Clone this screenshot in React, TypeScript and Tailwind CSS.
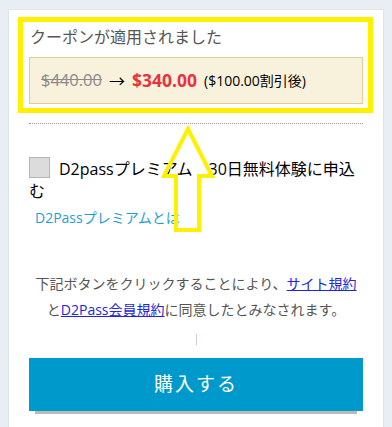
import React from 'react';

const font = { fontFamily: '"Open Sans", "Noto Sans CJK JP", sans-serif' };

const App: React.FC = () => {
    return (
        <div className="relative min-h-[427px] bg-[#e9edf4] pt-[9px] px-[8px] overflow-hidden" style={font}>
            <div className="bg-white border border-[#dfe3ea] border-b-0 min-h-[418px] px-[20px] pt-[15px]">
                <h3 className="text-[16px] leading-[24px] text-[#555] ml-[1px]">クーポンが適用されました</h3>

                <div className="mt-[8px] h-[47px] border border-[#e2cf8c] bg-[#f8f1dc] flex items-center px-[11px] gap-[7px] whitespace-nowrap">
                    <span className="text-[16.5px] text-[#8a8a8a] line-through">$440.00</span>
                    <span className="text-[16px] text-black">→</span>
                    <span className="text-[17.5px] font-bold text-[#e8323c]">$340.00</span>
                    <span className="text-[14px] text-black">($100.00割引後)</span>
                </div>

                <div className="mt-[19px] border-t border-dotted border-[#999]" />

                <div className="mt-[33px] text-[16px] leading-[22px] text-black">
                    <span className="inline-block align-[-3px] w-[21px] h-[21px] bg-[#dcdcdc] border border-[#b5b5b5] mr-[9px]" />
                    D2passプレミアム　30日無料体験に申込む
                </div>
                <div className="mt-[6px] pl-[6px] text-[14px] leading-[20px] text-[#1e9fd4]">D2Passプレミアムとは</div>

                <p className="mt-[43px] text-center text-[14px] leading-[26px] text-[#555]">
                    下記ボタンをクリックすることにより、<a className="text-[#2424dd] underline">サイト規約</a>
                    <br />
                    と<a className="text-[#2424dd] underline">D2Pass会員規約</a>に同意したとみなされます。
                </p>

                <div className="flex justify-center mt-[11px]">
                    <div className="w-px h-[11px] bg-[#dccaca]" />
                </div>

                <button className="mt-[13px] w-full h-[53px] bg-[#0099cc] text-white text-[19px] tracking-[2px] shadow-[0_9px_0_-6px_#bbbbbb]">
                    購入する
                </button>
            </div>

            {/* annotation overlay */}
            <div className="absolute left-[18px] top-[17px] w-[355px] h-[96px] border-[5px] border-[#fff000] pointer-events-none" />
            <svg className="absolute left-0 top-0 pointer-events-none" width="392" height="427">
                <polygon
                    points="188,129 164,176 176,176 176,230 199,230 199,176 212,176"
                    fill="none"
                    stroke="#fff000"
                    strokeWidth="4"
                    strokeLinejoin="miter"
                />
            </svg>
        </div>
    );
};

export default App;
